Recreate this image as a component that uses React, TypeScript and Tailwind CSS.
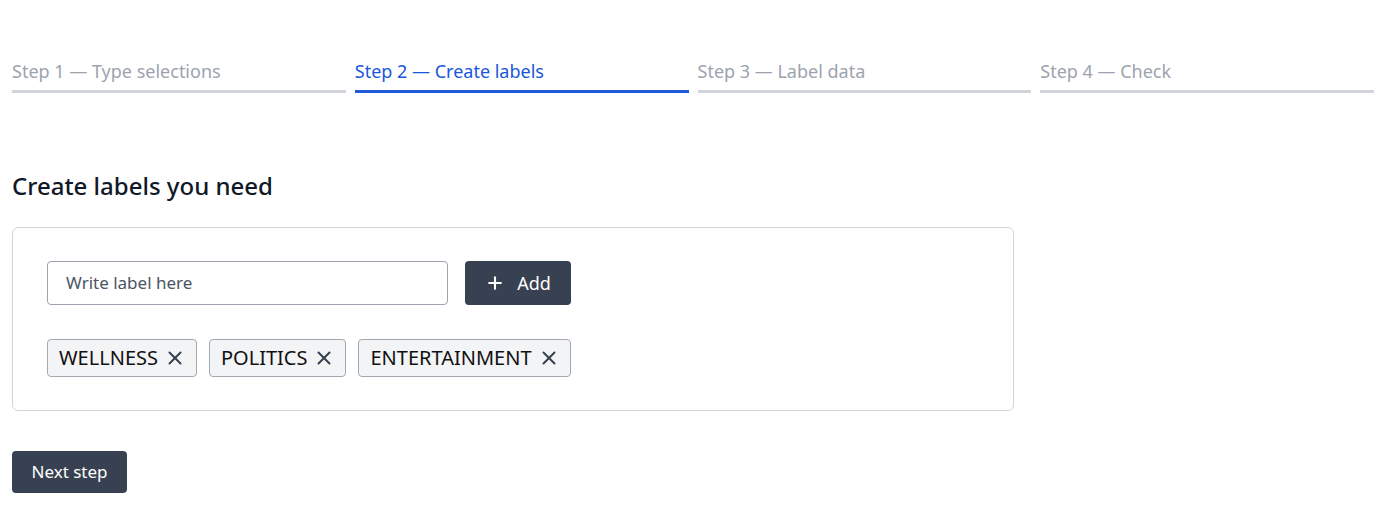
import { Plus, X } from "lucide-react";

const steps = [
  { label: "Step 1 — Type selections", active: false },
  { label: "Step 2 — Create labels", active: true },
  { label: "Step 3 — Label data", active: false },
  { label: "Step 4 — Check", active: false },
];

const labels = ["WELLNESS", "POLITICS", "ENTERTAINMENT"];

function Stepper() {
  return (
    <div className="grid grid-cols-4 gap-x-[9px] w-[1362px]">
      {steps.map((s) => (
        <div key={s.label} className="flex flex-col">
          <span
            className={`text-[18px] leading-[24px] ${s.active ? "text-[#1a56db]" : "text-[#9ca3af]"}`}
          >
            {s.label}
          </span>
          <div className={`mt-[7px] h-[3px] ${s.active ? "bg-[#1f5bd8]" : "bg-[#d1d5db]"}`} />
        </div>
      ))}
    </div>
  );
}

function Tag({ text }: { text: string }) {
  return (
    <div className="flex items-center gap-[6px] h-[38px] pl-[11px] pr-[10px] bg-[#f3f4f6] border border-[#a3a8b0] rounded-[4px]">
      <span className="text-[20px] text-[#111] leading-none">{text}</span>
      <X className="size-[22px] text-[#374151]" strokeWidth={2.2} />
    </div>
  );
}

export default function App() {
  return (
    <div
      className="w-[1400px] h-[505px] bg-white px-[12px] pt-[59px]"
      style={{ fontFamily: '"Noto Sans", "Open Sans", sans-serif' }}
    >
      <Stepper />

      <h1 className="mt-[77px] text-[24px] leading-[32px] font-medium text-[#111827]">Create labels you need</h1>

      <div className="mt-[25px] w-[1002px] border border-[#d1d5db] rounded-[6px] pl-[34px] pt-[33px] pb-[33px]">
        <div className="flex items-center gap-[17px]">
          <div className="w-[401px] h-[44px] border border-[#9ca3af] rounded-[4px] flex items-center pl-[18px]">
            <span className="text-[17px] text-[#4b5563]">Write label here</span>
          </div>
          <button className="h-[44px] w-[106px] bg-[#374151] rounded-[4px] flex items-center justify-center gap-[12px] text-white">
            <Plus className="size-[20px]" strokeWidth={2.5} />
            <span className="text-[18px]">Add</span>
          </button>
        </div>
        <div className="mt-[34px] flex gap-[12px]">
          {labels.map((l) => (
            <Tag key={l} text={l} />
          ))}
        </div>
      </div>

      <button className="mt-[40px] h-[42px] w-[115px] bg-[#374151] rounded-[4px] text-white text-[17px]">
        Next step
      </button>
    </div>
  );
}
